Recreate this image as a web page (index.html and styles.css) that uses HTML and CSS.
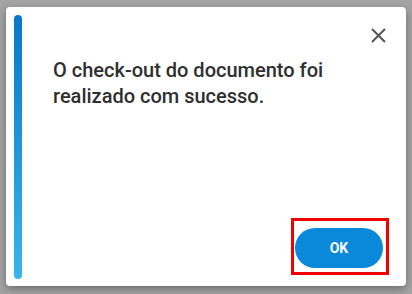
FILE: index.html
```html
<!DOCTYPE html>
<html>
<head>
<meta charset="utf-8">
<link rel="stylesheet" href="styles.css">
</head>
<body>
<div class="dialog">
  <div class="accent"></div>
  <div class="main">
    <div class="top">
      <button class="close" aria-label="Fechar">
        <svg width="15" height="15" viewBox="0 0 15 15"><path d="M1 1L14 14M14 1L1 14" stroke="#555" stroke-width="2" fill="none"/></svg>
      </button>
    </div>
    <p class="message">O check-out do documento foi realizado com sucesso.</p>
    <div class="actions">
      <div class="highlight"><button class="ok">OK</button></div>
    </div>
  </div>
</div>
</body>
</html>
```
FILE: styles.css
```css
html, body { margin: 0; padding: 0; }
body {
  width: 412px;
  height: 294px;
  background: #a4a4a4;
  font-family: Roboto, "Liberation Sans", sans-serif;
  padding: 7px 6px 8px 6px;
  box-sizing: border-box;
}
.dialog {
  width: 400px;
  height: 279px;
  background: #fff;
  border-radius: 4px;
  box-shadow: 0 3px 8px rgba(0,0,0,0.35);
  display: flex;
  padding: 8px 0 7px 8px;
  box-sizing: border-box;
}
.accent {
  width: 8px;
  flex: none;
  border-radius: 4px;
  background: linear-gradient(#0778c9, #38b6eb);
}
.main {
  flex: 1;
  display: flex;
  flex-direction: column;
  padding-left: 31px;
  padding-right: 20px;
}
.top {
  display: flex;
  justify-content: flex-end;
  padding-top: 13px;
}
.close {
  border: 0;
  background: none;
  padding: 0;
  width: 15px;
  height: 15px;
  display: block;
}
.close svg { display: block; }
.message {
  margin: 14px 0 0 0;
  font-size: 20px;
  font-weight: 500;
  line-height: 26px;
  color: #2f2f2f;
  width: 300px;
}
.actions {
  margin-top: auto;
  display: flex;
  justify-content: flex-end;
  margin-right: -1px;
  margin-bottom: 4px;
}
.highlight {
  border: 3px solid #f00000;
  padding: 7px 3px 4px 0px;
  margin-right: -2px;
}
.ok {
  display: block;
  width: 88px;
  height: 40px;
  border: 0;
  border-radius: 20px;
  background: #0a89da;
  color: #fff;
  font-family: Roboto, "Liberation Sans", sans-serif;
  font-weight: 700;
  font-size: 14px;
  margin-left: 1px;
}
```
